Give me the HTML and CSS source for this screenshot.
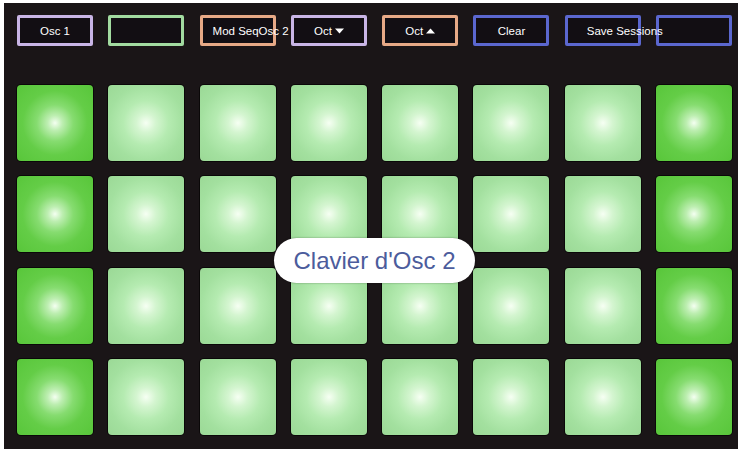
FILE: index.html
```html
<!DOCTYPE html>
<html>
<head>
<meta charset="utf-8">
<link rel="stylesheet" href="styles.css">
</head>
<body>
<div class="panel">
  <div class="toolbar">
    <div class="btn b-lav"><span>Osc 1</span></div>
    <div class="btn b-grn"></div>
    <div class="btn b-org left pl-mod"><span>Mod SeqOsc 2</span></div>
    <div class="btn b-lav"><span>Oct</span><svg class="tri" width="9" height="6" viewBox="0 0 9 6"><polygon points="0,0.5 9,0.5 4.5,5.5" fill="#fff"/></svg></div>
    <div class="btn b-org"><span>Oct</span><svg class="tri" width="9" height="6" viewBox="0 0 9 6"><polygon points="0,5.5 9,5.5 4.5,0.5" fill="#fff"/></svg></div>
    <div class="btn b-blu"><span>Clear</span></div>
    <div class="btn b-blu left pl-save"><span>Save Sessions</span></div>
    <div class="btn b-blu"></div>
  </div>
  <div class="grid">
    <div class="pad sat"></div><div class="pad"></div><div class="pad"></div><div class="pad"></div><div class="pad"></div><div class="pad"></div><div class="pad"></div><div class="pad sat"></div>
    <div class="pad sat"></div><div class="pad"></div><div class="pad"></div><div class="pad"></div><div class="pad"></div><div class="pad"></div><div class="pad"></div><div class="pad sat"></div>
    <div class="pad sat"></div><div class="pad"></div><div class="pad"></div><div class="pad"></div><div class="pad"></div><div class="pad"></div><div class="pad"></div><div class="pad sat"></div>
    <div class="pad sat"></div><div class="pad"></div><div class="pad"></div><div class="pad"></div><div class="pad"></div><div class="pad"></div><div class="pad"></div><div class="pad sat"></div>
    <div class="tooltip">Clavier d'Osc 2</div>
  </div>
</div>
</body>
</html>
```
FILE: styles.css
```css
html, body {
  margin: 0;
  padding: 0;
  background: #ffffff;
}
body {
  width: 745px;
  height: 453px;
  overflow: hidden;
  font-family: "Liberation Sans", Arial, sans-serif;
}
.panel {
  margin: 3px 0 0 4px;
  width: 734px;
  height: 446px;
  background: #1a1517;
  box-sizing: border-box;
  padding: 12px 0 0 13px;
}
.toolbar {
  display: grid;
  grid-template-columns: repeat(8, 76px);
  column-gap: 15.3px;
  height: 31px;
}
.btn {
  box-sizing: border-box;
  height: 31px;
  border: 3px solid;
  border-radius: 2px;
  background: #120e13;
  color: #ffffff;
  font-size: 11.5px;
  display: flex;
  align-items: center;
  justify-content: center;
  white-space: nowrap;
  overflow: visible;
  position: relative;
  z-index: 1;
}
.btn.left {
  justify-content: flex-start;
}
.pl-mod { padding-left: 10px; }
.pl-save { padding-left: 19px; z-index: 2; }
.b-lav { border-color: #c9b5e6; }
.b-grn { border-color: #a2dba0; }
.b-org { border-color: #e7a986; }
.b-blu { border-color: #5b67cf; }
.tri {
  margin-left: 3px;
  margin-top: 1px;
}
.grid {
  position: relative;
  margin-top: 39px;
  display: grid;
  grid-template-columns: repeat(8, 76px);
  grid-auto-rows: 76px;
  column-gap: 15.3px;
  row-gap: 15.3px;
}
.pad {
  border-radius: 4px;
  box-shadow: 0 0 0 1px #0a0808;
  background: radial-gradient(circle at 50% 50%, #f6fff3 0%, #d4f5d0 18%, #b5ebb1 42%, #a3e09f 70%, #9bd996 100%);
}
.pad.sat {
  background: radial-gradient(circle at 50% 50%, #f4fff1 0%, #bdeeb1 14%, #86dc70 34%, #64cd47 60%, #58c63a 100%);
}
.tooltip {
  position: absolute;
  left: 257px;
  top: 153px;
  width: 201px;
  height: 45px;
  box-sizing: border-box;
  border-radius: 23px;
  background: #ffffff;
  color: #4c5c9c;
  font-size: 24px;
  display: flex;
  align-items: center;
  justify-content: center;
  box-shadow: 0 0 2px rgba(0,0,0,0.4);
}
```
